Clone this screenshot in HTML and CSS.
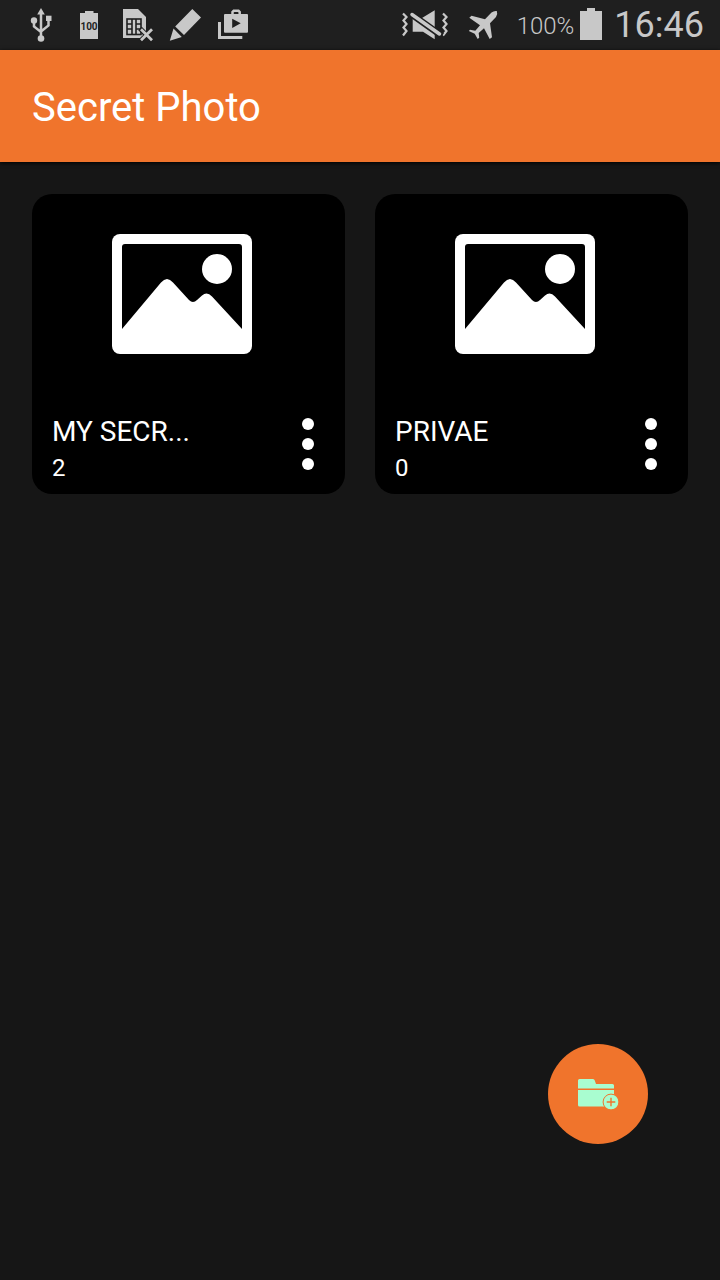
FILE: index.html
```html
<!DOCTYPE html>
<html lang="en">
<head>
  <meta charset="UTF-8">
  <meta name="viewport" content="width=device-width, initial-scale=1">
  <title>Secret Photo</title>
  <link rel="stylesheet" href="styles.css">
</head>
<body>
  <div class="statusbar">
    <div class="notifications">
      <!-- usb -->
      <svg width="32" height="36" viewBox="0 0 32 36">
        <path d="M16 6V30M9 13V19.500L16 25M23.500 12V18.500L16 24.500" fill="none" stroke="#c8c8c8" stroke-width="2.500"/>
        <path d="M16 1L19.800 7.500H12.200Z"/>
        <circle cx="16" cy="31.500" r="3.300"/>
        <circle cx="9" cy="13.500" r="3.200"/>
        <rect x="21" y="8.700" width="5.500" height="5.300"/>
      </svg>
      <!-- battery full -->
      <svg width="32" height="36" viewBox="0 0 32 36">
        <path d="M12 4H20.500V6H25V32H7V6H12Z"/>
        <text class="charge" x="16" y="23" text-anchor="middle">100</text>
      </svg>
      <!-- no sim -->
      <svg width="32" height="36" viewBox="0 0 32 36">
        <path d="M2 2H17L25 10V31H2Z"/>
        <g fill="none" stroke="#1f1f1f" stroke-width="1.600">
          <rect x="6" y="12" width="14" height="15.500"/>
          <path d="M11 12V27M15 12V27M6 17H11M6 22H11M15 17H20M15 22H20"/>
        </g>
        <path d="M19 21.500L32 34.500M32 21.500L19 34.500" stroke="#1f1f1f" stroke-width="5"/>
        <path d="M20 22.300L31 33.300M31 22.300L20 33.300" stroke="#c8c8c8" stroke-width="2.800"/>
      </svg>
      <!-- pencil -->
      <svg width="32" height="36" viewBox="0 0 32 36">
        <path d="M23.300 2L32 10.500L15 28L6.200 19.500ZM4.500 21.500L12.800 30L0.800 33.800Z"/>
      </svg>
      <!-- play store -->
      <svg width="32" height="36" viewBox="0 0 32 36">
        <path d="M1 15H4V29H25.300V32H1Z"/>
        <path d="M15.500 8V5L16.700 3.800H21.500L22.700 5V8" fill="none" stroke="#c8c8c8" stroke-width="2.500"/>
        <rect x="7" y="7" width="24" height="18.800" rx="1"/>
        <path d="M15.200 11.700V21L23.700 16.300Z" fill="#1f1f1f"/>
      </svg>
    </div>
    <div class="system">
      <!-- sound off -->
      <svg width="48" height="36" viewBox="0 0 48 36">
        <g fill="none" stroke="#c8c8c8" stroke-width="2.200">
          <path d="M2 6.500L5.500 10L2.500 13.500L5.500 17L2.500 20.500L5.500 24L2 28.500"/>
          <path d="M42 6.500L45.500 10L42.500 13.500L45.500 17L42.500 20.500L45.500 24L42 28.500"/>
        </g>
        <path d="M11.700 11H21L33.700 3.300V32.300L22 24.700H11.700Z"/>
        <path d="M8 5.500L41 29" stroke="#1f1f1f" stroke-width="6.500"/>
        <path d="M11 7.500L38.500 27" stroke="#c8c8c8" stroke-width="3.500" stroke-linecap="round"/>
      </svg>
      <!-- airplane mode -->
      <svg class="plane" width="32" height="36" viewBox="0 0 32 36">
        <path d="M29.800 4Q27 3.500 24.500 5.500L18 12.300L4.500 8.700L2.300 10.700L13 18.300L8.300 23.700L3 22.700L1.800 24L7.700 26.700L10.700 32L12.200 30.700L11.700 26L17 21.300L22.700 32L25 30.300L23 16.300L29 10Q31 7 29.800 4Z"/>
      </svg>
      <span class="percent">100%</span>
      <svg width="22" height="36" viewBox="0 0 22 36">
        <path d="M7 1H15V4H22V33H0V4H7Z"/>
      </svg>
      <span class="clock">16:46</span>
    </div>
  </div>

  <header class="appbar">
    <h1>Secret Photo</h1>
  </header>

  <main class="albums">
    <article class="album">
      <svg class="thumb" width="140" height="120" viewBox="0 0 140 120">
        <rect width="140" height="120" rx="8"/>
        <path d="M13 10H127Q130 10 130 13V95L100 62.500Q95 57 90 61.500L85 66Q81 70 77 66L61 48.500Q55 41.500 49 48.500L10 95V13Q10 10 13 10Z" fill="#000"/>
        <circle cx="105" cy="35" r="15"/>
      </svg>
      <div class="info">
        <div class="label">
          <h2>MY SECR...</h2>
          <p>2</p>
        </div>
        <button class="more" aria-label="Album options">
          <svg width="12" height="54" viewBox="0 0 12 54">
            <circle cx="6" cy="7" r="6"/>
            <circle cx="6" cy="27" r="6"/>
            <circle cx="6" cy="47" r="6"/>
          </svg>
        </button>
      </div>
    </article>
    <article class="album">
      <svg class="thumb" width="140" height="120" viewBox="0 0 140 120">
        <rect width="140" height="120" rx="8"/>
        <path d="M13 10H127Q130 10 130 13V95L100 62.500Q95 57 90 61.500L85 66Q81 70 77 66L61 48.500Q55 41.500 49 48.500L10 95V13Q10 10 13 10Z" fill="#000"/>
        <circle cx="105" cy="35" r="15"/>
      </svg>
      <div class="info">
        <div class="label">
          <h2>PRIVAE</h2>
          <p>0</p>
        </div>
        <button class="more" aria-label="Album options">
          <svg width="12" height="54" viewBox="0 0 12 54">
            <circle cx="6" cy="7" r="6"/>
            <circle cx="6" cy="27" r="6"/>
            <circle cx="6" cy="47" r="6"/>
          </svg>
        </button>
      </div>
    </article>
  </main>

  <button class="fab" aria-label="New album">
    <svg width="44" height="44" viewBox="0 0 44 44">
      <path d="M2 16.500V8.500Q2 7 3.500 7H17Q18.300 7 18.800 8.500L20 12H36.500Q38 12 38 13.500V16.500ZM2 18H38V33Q38 34.500 36.500 34.500H3.500Q2 34.500 2 33Z"/>
      <circle cx="35" cy="30" r="7.900" stroke="#f0742c" stroke-width="1"/>
      <path d="M35 25.700V34.300M30.700 30H39.300" stroke="#f0742c" stroke-width="1.400"/>
    </svg>
  </button>
</body>
</html>
```

FILE: styles.css
```css
* {
  box-sizing: border-box;
}

body {
  margin: 0;
  min-height: 100vh;
  background-color: #161616;
  color: #fff;
  font-family: Roboto, "Liberation Sans", sans-serif;
}

h1, h2, p {
  margin: 0;
  font-weight: 400;
}

button {
  border: none;
  padding: 0;
  cursor: pointer;
}

svg {
  display: block;
  flex: none;
}

/* status bar */
.statusbar {
  display: flex;
  justify-content: space-between;
  height: 50px;
  padding: 0 16px 0 25px;
  background-color: #1f1f1f;
  color: #c8c8c8;
  fill: #c8c8c8;
}

.notifications,
.system {
  display: flex;
  align-items: center;
}

.notifications {
  gap: 16px;
}

.charge {
  font-size: 10px;
  font-weight: 700;
  fill: #1f1f1f;
}

.plane {
  margin: 0 18px;
}

.percent {
  margin-right: 6px;
  padding-top: 2px;
  font-size: 24px;
  font-weight: 300;
}

.clock {
  margin-left: 12px;
  font-size: 36px;
}

/* app bar */
.appbar {
  display: flex;
  align-items: center;
  height: 112px;
  padding: 2px 32px 0;
  background-color: #f0742c;
  box-shadow: 0 1px 4px #000;
}

.appbar h1 {
  font-size: 40px;
}

/* album grid */
.albums {
  display: grid;
  grid-template-columns: 1fr 1fr;
  gap: 30px;
  padding: 32px;
}

.album {
  display: flex;
  flex-direction: column;
  padding: 40px 20px 8px;
  border-radius: 20px;
  background-color: #000;
}

.thumb {
  align-self: center;
  margin-right: 14px;
  fill: #fff;
}

.info {
  display: flex;
  justify-content: space-between;
  margin-top: 60px;
}

.label h2 {
  font-size: 28px;
  line-height: 36px;
}

.label p {
  font-size: 24px;
  line-height: 36px;
}

.more {
  align-self: flex-start;
  padding: 3px 11px;
  background: none;
  fill: #fff;
}

/* new album button */
.fab {
  position: fixed;
  right: 72px;
  bottom: 136px;
  display: flex;
  align-items: center;
  justify-content: center;
  width: 100px;
  height: 100px;
  border-radius: 50%;
  background-color: #f0742c;
  fill: #a9fdd0;
}
```
